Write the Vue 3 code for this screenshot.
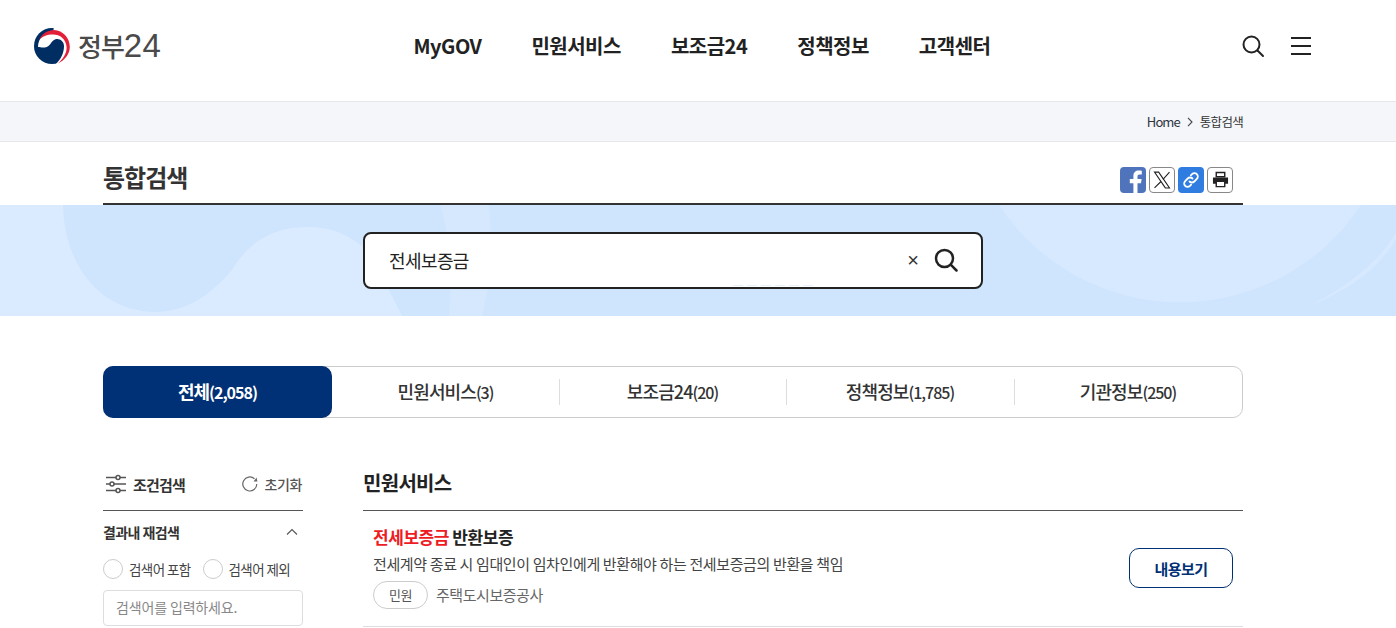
<script setup>
const tabs = [
  { name: '전체', count: '(2,058)', active: true },
  { name: '민원서비스', count: '(3)' },
  { name: '보조금24', count: '(20)' },
  { name: '정책정보', count: '(1,785)' },
  { name: '기관정보', count: '(250)' }
]
const nav = ['MyGOV', '민원서비스', '보조금24', '정책정보', '고객센터']
</script>

<template>
  <div class="page">
    <header class="header">
      <div class="logo">
        <svg class="mark" width="38" height="38" viewBox="0 0 38 38">
          <circle cx="19" cy="19" r="18" fill="#002d62" />
          <path d="M5 20 C5 11 12 5 20 5 L21 0 H38 V38 H22 L23 37 C28 32 31 26 31 19 C31 14 26 11 22 12.5 C18 14 17 20 12 20.5 C9 20.8 6.5 20 5 20Z" fill="#fff" />
          <path d="M6 13 C9 6.5 15 3 21 3 C30 3.5 36.8 11 36.8 20 C36.8 27 32 33 25 36.5 C30 32 34 26 33.6 20 C33 12 27 7.5 20 7.5 C14 7.5 9 9.5 6 13Z" fill="#e2203a" />
        </svg>
        <span class="logo-text">정부<span class="logo-num">24</span></span>
      </div>
      <nav class="nav">
        <a v-for="n in nav" :key="n">{{ n }}</a>
      </nav>
      <div class="head-icons">
        <svg width="24" height="24" viewBox="0 0 24 24" fill="none" stroke="#222" stroke-width="2">
          <circle cx="10.5" cy="10.5" r="8" />
          <path d="M16.5 16.5 L22 22" stroke-linecap="round" />
        </svg>
        <div class="burger"><i></i><i></i><i></i></div>
      </div>
    </header>

    <div class="crumbs">
      <div class="crumbs-inner">
        <span class="home">Home</span>
        <svg width="8" height="10" viewBox="0 0 8 10" fill="none" stroke="#444" stroke-width="1.1"><path d="M2 .8 L6 5 L2 9.2" /></svg>
        <span class="cur">통합검색</span>
      </div>
    </div>

    <div class="title-row">
      <h1>통합검색</h1>
      <div class="share">
        <span class="sbtn fb">
          <svg width="26" height="26" viewBox="0 0 26 26"><path d="M17.5 26 V16.2 H21 L21.6 12 H17.5 V9.6 C17.5 8.3 18 7.4 19.7 7.4 H21.8 V3.7 C21.3 3.6 20 3.5 18.7 3.5 C15.6 3.5 13.4 5.4 13.4 9 V12 H9.8 V16.2 H13.4 V26Z" fill="#fff" /></svg>
        </span>
        <span class="sbtn plain">
          <svg width="20" height="20" viewBox="0 0 24 24" fill="none" stroke="#222" stroke-width="1.3"><path d="M3 2.5 H8 L21 21.5 H16Z" /><path d="M21 2.5 L13.2 11.2 M10.8 13.8 L3 21.5" /></svg>
        </span>
        <span class="sbtn link">
          <svg width="18" height="18" viewBox="0 0 24 24" fill="none" stroke="#fff" stroke-width="2.4" stroke-linecap="round"><path d="M10 14 a4.5 4.5 0 0 0 6.4 0 l3.4 -3.4 a4.5 4.5 0 0 0 -6.4 -6.4 l-1.6 1.6" /><path d="M14 10 a4.5 4.5 0 0 0 -6.4 0 l-3.4 3.4 a4.5 4.5 0 0 0 6.4 6.4 l1.6 -1.6" /></svg>
        </span>
        <span class="sbtn plain">
          <svg width="17" height="17" viewBox="0 0 18 18"><path d="M4.5 1.5 H13.5 V6 H4.5Z" fill="none" stroke="#222" stroke-width="1.5" /><path d="M1 7 H17 V13.5 H13.5 V11 H4.5 V13.5 H1Z" fill="#222" /><path d="M4.5 11 H13.5 V16.5 H4.5Z" fill="none" stroke="#222" stroke-width="1.5" /></svg>
        </span>
      </div>
    </div>

    <section class="hero">
      <svg class="hero-bg" width="1396" height="111" viewBox="0 0 1396 111">
        <rect width="1396" height="111" fill="#cfe5fe" />
        <path d="M0 0 H63 C64 60 100 107 156 107 C190 107 215 85 232 65 C250 35 275 22 308 22 C335 22 352 32 370 48 L402 111 H0Z" fill="#dbebff" />
        <path d="M440 0 H489 C493 40 490 80 482 111 H449 C452 70 450 30 440 0Z" fill="#d6e8fe" />
        <path d="M999 0 A217 217 0 0 0 1361 0Z" fill="#d7e9fe" />
        <path d="M1311 100 C1350 80 1380 55 1396 28 V34 C1380 62 1350 85 1311 100Z" fill="#d7e9fe" />
      </svg>
      <div class="search">
        <span class="query">전세보증금</span>
        <span class="clear">×</span>
        <svg width="24" height="24" viewBox="0 0 24 24" fill="none" stroke="#222" stroke-width="2.5">
          <circle cx="10.5" cy="10.5" r="8.5" />
          <path d="M16.7 16.7 L22.5 22.5" stroke-linecap="round" />
        </svg>
        <span class="ghost"></span>
      </div>
    </section>

    <div class="tabs">
      <button v-for="t in tabs" :key="t.name" class="tab" :class="{ active: t.active }">
        <span class="tab-label">{{ t.name }}<span class="count">{{ t.count }}</span></span>
      </button>
    </div>

    <div class="content">
      <aside class="side">
        <div class="side-head">
          <div class="side-title">
            <svg width="22" height="22" viewBox="0 0 22 22" fill="none" stroke="#555" stroke-width="1.5">
              <path d="M1 4.5 H11 M15 4.5 H21 M1 11 H5 M9 11 H21 M1 17.5 H11 M15 17.5 H21" />
              <circle cx="13" cy="4.5" r="2" /><circle cx="7" cy="11" r="2" /><circle cx="13" cy="17.5" r="2" />
            </svg>
            <strong>조건검색</strong>
          </div>
          <div class="reset">
            <svg width="18" height="18" viewBox="0 0 18 18" fill="none" stroke="#666" stroke-width="1.2">
              <path d="M15.8 9 A7 7 0 1 1 13.5 3.8" />
              <path d="M12.6 6.4 L16.4 6.4 L15.6 2.6Z" fill="#666" stroke="none" />
            </svg>
            <span>초기화</span>
          </div>
        </div>
        <div class="re-head">
          <strong>결과내 재검색</strong>
          <svg width="12" height="8" viewBox="0 0 12 8" fill="none" stroke="#555" stroke-width="1.1"><path d="M1 6.5 L6 1.5 L11 6.5" /></svg>
        </div>
        <div class="radios">
          <label><i></i>검색어 포함</label>
          <label><i></i>검색어 제외</label>
        </div>
        <div class="fake-input">검색어를 입력하세요.</div>
      </aside>

      <main class="main">
        <h2>민원서비스</h2>
        <article class="item">
          <div class="item-text">
            <h3><em>전세보증금</em> 반환보증</h3>
            <p>전세계약 종료 시 임대인이 임차인에게 반환해야 하는 전세보증금의 반환을 책임</p>
            <div class="meta"><span class="pill">민원</span><span class="org">주택도시보증공사</span></div>
          </div>
          <button class="view">내용보기</button>
        </article>
      </main>
    </div>
  </div>
</template>

<style>
html, body { margin: 0; overflow: hidden; background: #fff; }
</style>

<style scoped>
.page { width: 1396px; height: 628px; overflow: hidden; font-family: "Noto Sans CJK KR", "Noto Sans", sans-serif; color: #222; }
.header { height: 101px; display: flex; align-items: center; padding: 0 85px 10px 33px; box-sizing: border-box; }
.logo { display: flex; align-items: center; width: 128px; gap: 7px; }
.mark { flex: none; }
.logo-text { font-size: 26px; color: #4a4a4a; letter-spacing: -1px; font-weight: 500; line-height: 38px; white-space: nowrap; }
.logo-num { font-family: "Liberation Sans", sans-serif; font-size: 33px; font-weight: 400; letter-spacing: 0.4px; }
.nav { display: flex; gap: 50px; margin-left: 252.5px; }
.nav a { font-size: 20px; font-weight: 700; color: #222; letter-spacing: -0.5px; line-height: 30px; }
.head-icons { margin-left: auto; display: flex; align-items: center; gap: 26px; }
.burger { width: 20px; display: flex; flex-direction: column; gap: 6px; }
.burger i { display: block; height: 2px; background: #222; }
.crumbs { height: 39px; background: #f4f6fa; border-top: 1px solid #e6e8ec; border-bottom: 1px solid #e6e8ec; }
.crumbs-inner { width: 1140px; margin-left: 103px; height: 39px; display: flex; align-items: center; justify-content: flex-end; gap: 6px; }
.home { font-size: 13px; letter-spacing: -0.9px; color: #2c3440; }
.cur { font-size: 12.5px; letter-spacing: -0.7px; color: #333; }
.title-row { width: 1140px; margin-left: 103px; height: 63px; box-sizing: border-box; border-bottom: 2px solid #333; display: flex; align-items: center; justify-content: space-between; padding: 14px 10px 0 0; }
h1 { margin: 0; font-size: 24px; font-weight: 700; letter-spacing: -1px; color: #333; position: relative; top: -3px; }
.share { display: flex; gap: 3px; }
.sbtn { width: 26px; height: 26px; box-sizing: border-box; border-radius: 4px; display: flex; align-items: center; justify-content: center; overflow: hidden; }
.sbtn.fb { background: #4f74bb; }
.sbtn.plain { border: 1px solid #888; background: #fff; }
.sbtn.link { background: #2f7de1; }
.hero { position: relative; height: 111px; padding-left: 363px; }
.hero-bg { position: absolute; left: 0; top: 0; }
.search { position: relative; top: 27px; width: 620px; height: 57px; box-sizing: border-box; border: 2px solid #222; border-radius: 8px; background: #fff; display: flex; align-items: center; padding: 0 23px 2px 24px; }
.query { font-size: 18px; letter-spacing: -0.6px; color: #222; flex: 1; }
.clear { font-family: "Liberation Sans", sans-serif; font-size: 20px; color: #333; margin-right: 15px; line-height: 24px; }
.ghost { position: absolute; left: 368px; bottom: 1px; width: 82px; height: 1px; background: repeating-linear-gradient(90deg, #e6f0fc 0 10px, transparent 10px 14px); }
.tabs { width: 1140px; height: 52px; margin: 50px 0 0 103px; box-sizing: border-box; border: 1px solid #ccc; border-radius: 10px; display: grid; grid-template-columns: 228px 227px 227px 228px 1fr; position: relative; }
.tab { border: 0; background: none; font: inherit; font-size: 18px; font-weight: 500; letter-spacing: -0.9px; color: #333; position: relative; padding: 0 0 2px; }
.tab + .tab:not(:nth-child(2))::before { content: ""; position: absolute; left: 0; top: 12px; bottom: 12px; width: 1px; background: #ddd; }
.tab.active { background: #003075; color: #fff; font-weight: 700; letter-spacing: -1.1px; border-radius: 10px; margin: -1px 0 -1px -1px; }
.count { font-size: 16px; letter-spacing: -1px; }
.content { width: 1140px; margin-left: 103px; display: flex; gap: 60px; padding-top: 42px; }
.side { width: 200px; flex: none; }
.side-head { height: 51px; box-sizing: border-box; border-bottom: 1px solid #555; display: flex; align-items: center; justify-content: space-between; padding: 0 1px 2px 2px; }
.side-title { display: flex; align-items: center; gap: 6px; }
.side-title strong { font-size: 15px; font-weight: 700; letter-spacing: -0.8px; color: #333; }
.reset { display: flex; align-items: center; gap: 6px; font-size: 14px; font-weight: 500; color: #555; letter-spacing: -0.4px; }
.re-head { display: flex; align-items: center; justify-content: space-between; height: 43px; box-sizing: border-box; padding: 0 5px 2px 0; }
.re-head strong { font-size: 14px; font-weight: 700; letter-spacing: -0.6px; color: #333; }
.radios { display: flex; gap: 12px; height: 30px; align-items: center; }
.radios label { display: flex; align-items: center; gap: 6px; font-size: 13.5px; color: #444; letter-spacing: -0.6px; }
.radios i { width: 20px; height: 20px; box-sizing: border-box; border: 1px solid #ccc; border-radius: 50%; background: #fff; }
.fake-input { height: 36px; box-sizing: border-box; border: 1px solid #ddd; border-radius: 4px; font-size: 14px; color: #888; line-height: 32px; padding-left: 12px; margin-top: 6px; letter-spacing: -0.15px; }
.main { flex: 1; }
h2 { margin: 0; height: 51px; box-sizing: border-box; border-bottom: 1px solid #555; font-size: 20px; font-weight: 700; letter-spacing: -0.7px; color: #222; line-height: 46px; }
.item { height: 116px; box-sizing: border-box; border-bottom: 1px solid #ddd; display: flex; align-items: flex-start; justify-content: space-between; padding: 13px 10px 0; }
h3 { margin: 0; font-size: 17px; font-weight: 700; letter-spacing: -0.45px; color: #222; line-height: 26px; }
h3 em { font-style: normal; color: #ed1c24; }
.item p { margin: 3px 0 6px; font-size: 15px; letter-spacing: -0.37px; color: #444; line-height: 22px; }
.meta { display: flex; align-items: center; gap: 8px; }
.pill { width: 55px; height: 28px; box-sizing: border-box; border: 1px solid #ccc; border-radius: 14px; font-size: 13px; color: #555; text-align: center; line-height: 26px; letter-spacing: -0.5px; }
.org { font-size: 15px; color: #666; letter-spacing: -0.45px; position: relative; top: -1px; }
.view { width: 104px; height: 40px; margin-top: 24px; background: #fff; border: 1px solid #003075; border-radius: 10px; font: inherit; font-size: 15px; font-weight: 700; color: #003075; letter-spacing: -0.5px; padding: 0; }
</style>
